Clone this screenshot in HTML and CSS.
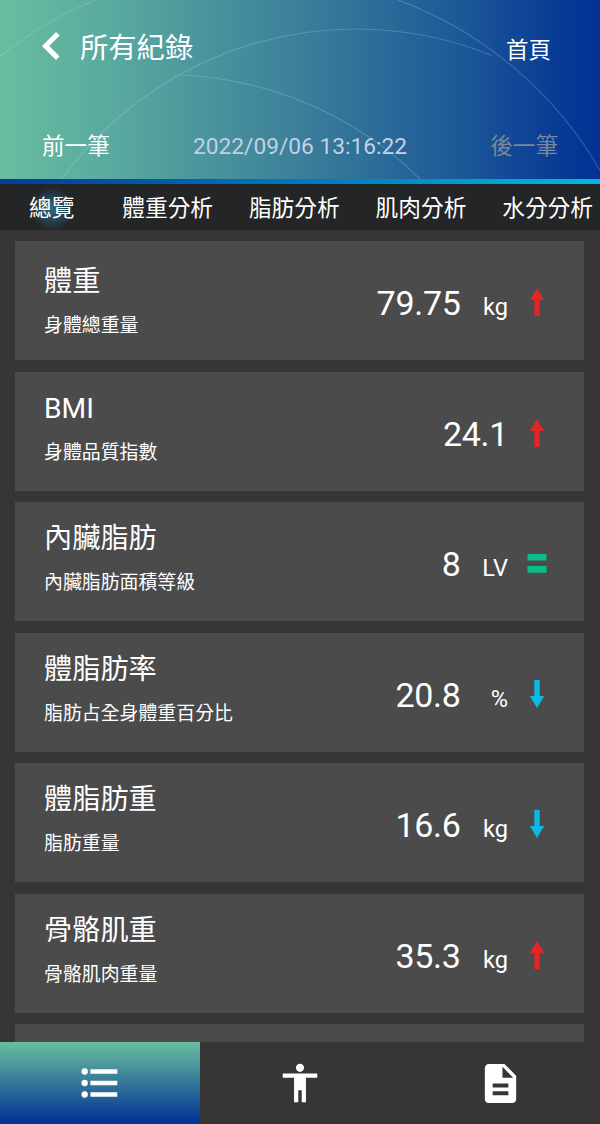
FILE: index.html
```html
<!DOCTYPE html>
<html lang="zh-Hant">
<head>
<meta charset="utf-8">
<title>所有紀錄</title>
<link rel="stylesheet" href="styles.css">
</head>
<body>
<div class="app">
  <header class="header">
    <svg class="header-arcs" viewBox="0 0 600 179" width="600" height="179">
      <path d="M0 56.500A391 391 0 0 1 95 0"/>
      <path d="M398 0A391 391 0 0 1 601 172"/>
      <path d="M62 179A363 363 0 0 1 492 55.500"/>
      <path d="M182 75A363 363 0 0 1 420 179"/>
    </svg>
    <div class="title-row">
      <svg class="back" viewBox="0 0 18 28" width="18" height="28"><path d="M0 14 14 0l3.600 3.500L7.200 14l10.400 10.500L14 28z"/></svg>
      <h1 class="title">所有紀錄</h1>
      <a class="home">首頁</a>
    </div>
    <div class="record-row">
      <a>前一筆</a>
      <span class="date">2022/09/06 13:16:22</span>
      <a class="disabled">後一筆</a>
    </div>
  </header>
  <div class="strip"></div>
  <nav class="tabs">
    <a class="tab active">總覽</a>
    <a class="tab">體重分析</a>
    <a class="tab">脂肪分析</a>
    <a class="tab">肌肉分析</a>
    <a class="tab">水分分析</a>
  </nav>
  <main class="list">
    <section class="card first">
      <div class="info"><h2>體重</h2><p>身體總重量</p></div>
      <div class="reading"><span class="value">79.75</span><span class="unit">kg</span></div>
      <svg class="mark up" viewBox="0 0 20 28" width="20" height="28"><path d="M10 0 17.200 12H12.700V28H7.300V12H2.800z"/></svg>
    </section>
    <section class="card">
      <div class="info"><h2>BMI</h2><p>身體品質指數</p></div>
      <div class="reading"><span class="value">24.1</span></div>
      <svg class="mark up" viewBox="0 0 20 28" width="20" height="28"><path d="M10 0 17.200 12H12.700V28H7.300V12H2.800z"/></svg>
    </section>
    <section class="card">
      <div class="info"><h2>內臟脂肪</h2><p>內臟脂肪面積等級</p></div>
      <div class="reading"><span class="value">8</span><span class="unit">LV</span></div>
      <svg class="mark equal" viewBox="0 0 20 28" width="20" height="28"><path d="M.5 5h19v6.500H.5zM.5 17h19v6.700H.5z"/></svg>
    </section>
    <section class="card">
      <div class="info"><h2>體脂肪率</h2><p>脂肪占全身體重百分比</p></div>
      <div class="reading"><span class="value">20.8</span><span class="unit">%</span></div>
      <svg class="mark down" viewBox="0 0 20 28" width="20" height="28"><path d="M10 28 2.800 16H7.300V0H12.700V16H17.200z"/></svg>
    </section>
    <section class="card">
      <div class="info"><h2>體脂肪重</h2><p>脂肪重量</p></div>
      <div class="reading"><span class="value">16.6</span><span class="unit">kg</span></div>
      <svg class="mark down" viewBox="0 0 20 28" width="20" height="28"><path d="M10 28 2.800 16H7.300V0H12.700V16H17.200z"/></svg>
    </section>
    <section class="card">
      <div class="info"><h2>骨骼肌重</h2><p>骨骼肌肉重量</p></div>
      <div class="reading"><span class="value">35.3</span><span class="unit">kg</span></div>
      <svg class="mark up" viewBox="0 0 20 28" width="20" height="28"><path d="M10 0 17.200 12H12.700V28H7.300V12H2.800z"/></svg>
    </section>
    <section class="card"></section>
  </main>
  <nav class="bottom">
    <a class="bottom-item active"><svg viewBox="0 0 24 24" width="46" height="46"><circle cx="4" cy="6" r="1.650"/><circle cx="4" cy="12" r="1.650"/><circle cx="4" cy="18" r="1.650"/><path d="M7 4.850h14v2.300H7zM7 10.850h14v2.300H7zM7 16.850h14v2.300H7z"/></svg></a>
    <a class="bottom-item"><svg viewBox="0 0 24 24" width="46" height="46"><path d="M12 2c1.200 0 2.150.95 2.150 2.100S13.200 6.200 12 6.200 9.850 5.250 9.850 4.100 10.800 2 12 2zm9 7.200h-5.900V22h-2.200v-6.200h-1.800V22H8.900V9.200H3V7h18v2.200z"/></svg></a>
    <a class="bottom-item"><svg viewBox="0 0 24 24" width="47" height="47"><path d="M14 2H6c-1.100 0-1.990.9-1.990 2L4 20c0 1.100.89 2 1.990 2H18c1.100 0 2-.9 2-2V8l-6-6zm2 16H8v-2h8v2zm0-4H8v-2h8v2zm-3-5V3.500L18.500 9H13z"/></svg></a>
  </nav>
</div>
</body>
</html>
```
FILE: styles.css
```css
* { box-sizing: border-box; }
body {
  margin: 0;
  background: #383536;
  color: #fff;
  font-family: Roboto, "Noto Sans CJK TC", sans-serif;
}
h1, h2, p { margin: 0; font-weight: 400; }
.app {
  display: flex;
  flex-direction: column;
  width: 600px;
  height: 1124px;
  overflow: hidden;
}
.header {
  position: relative;
  height: 179px;
  flex: none;
  background: linear-gradient(90deg, #68bda0 0%, #58a89f 20%, #3b7f9a 50%, #1c5797 77%, #043695 96%, #023394 100%);
}
.header-arcs {
  position: absolute;
  inset: 0;
  fill: none;
  stroke: #a8e0f0;
  stroke-opacity: .26;
  stroke-width: 1.1;
}
.title-row {
  position: relative;
  display: flex;
  align-items: center;
  height: 94px;
  padding: 0 50px 0 42px;
}
.back { fill: #fff; margin: 0 20px 2px 0; }
.title { padding-top: 3px; font-size: 28.3px; line-height: 40px; }
.home { margin: 5px -1px 0 auto; font-size: 22.5px; line-height: 32px; }
.record-row {
  position: relative;
  display: flex;
  align-items: center;
  justify-content: space-between;
  height: 85px;
  padding: 21px 42px 0;
  font-size: 22.6px;
  line-height: 32px;
}
.date { font-size: 22.7px; color: #c5cfe4; }
.disabled { color: #7c8798; }
.strip {
  flex: none;
  height: 5px;
  background: linear-gradient(90deg, #003c9c, #0078bd 50%, #00b9dc);
}
.tabs {
  flex: none;
  display: flex;
  justify-content: space-between;
  height: 46px;
  padding: 0 7px 0 29px;
  background: #242526;
  font-size: 22.7px;
  line-height: 50px;
}
.tab { white-space: nowrap; }
.tab.active {
  margin: 0 -10px 0 -10px;
  padding: 0 22px 0 10px;
  background: radial-gradient(circle at 33px 25px, #2a6b80 0, #254b5e 9px, rgba(36, 37, 38, 0) 22px);
}
.list {
  flex: 1;
  min-height: 0;
  overflow: hidden;
  display: flex;
  flex-direction: column;
  gap: 11.500px;
  padding: 11px 16px 0 15px;
}
.card {
  flex: none;
  display: flex;
  height: 119px;
  padding: 16px 37px 0 29px;
  background: #4b4b4b;
}
.card.first { padding-top: 20px; }
.info { flex: 1; }
.info h2 { font-size: 28.2px; line-height: 41px; height: 40px; }
.info p { margin-top: 10px; font-size: 18.9px; line-height: 29px; }
.reading {
  display: flex;
  justify-content: flex-end;
  align-items: baseline;
  height: 92px;
  line-height: 92px;
}
.card.first .reading { margin-top: -4px; }
.value { font-size: 34px; letter-spacing: -.3px; }
.unit { width: 47.500px; text-align: right; font-size: 23.6px; }
.mark { flex: none; margin: 31px 0 0 19px; }
.card.first .mark { margin-top: 27px; }
.up { fill: #e02626; }
.down { fill: #0cb9e3; }
.equal { fill: #0cbd8a; }
.bottom {
  flex: none;
  display: grid;
  grid-template-columns: repeat(3, 1fr);
  height: 82px;
  background: #383536;
}
.bottom-item {
  display: flex;
  align-items: center;
  justify-content: center;
}
.bottom-item svg { fill: #fff; }
.bottom-item.active { background: linear-gradient(180deg, #69bea0, #3a7f99 45%, #023394 98%); }
```
